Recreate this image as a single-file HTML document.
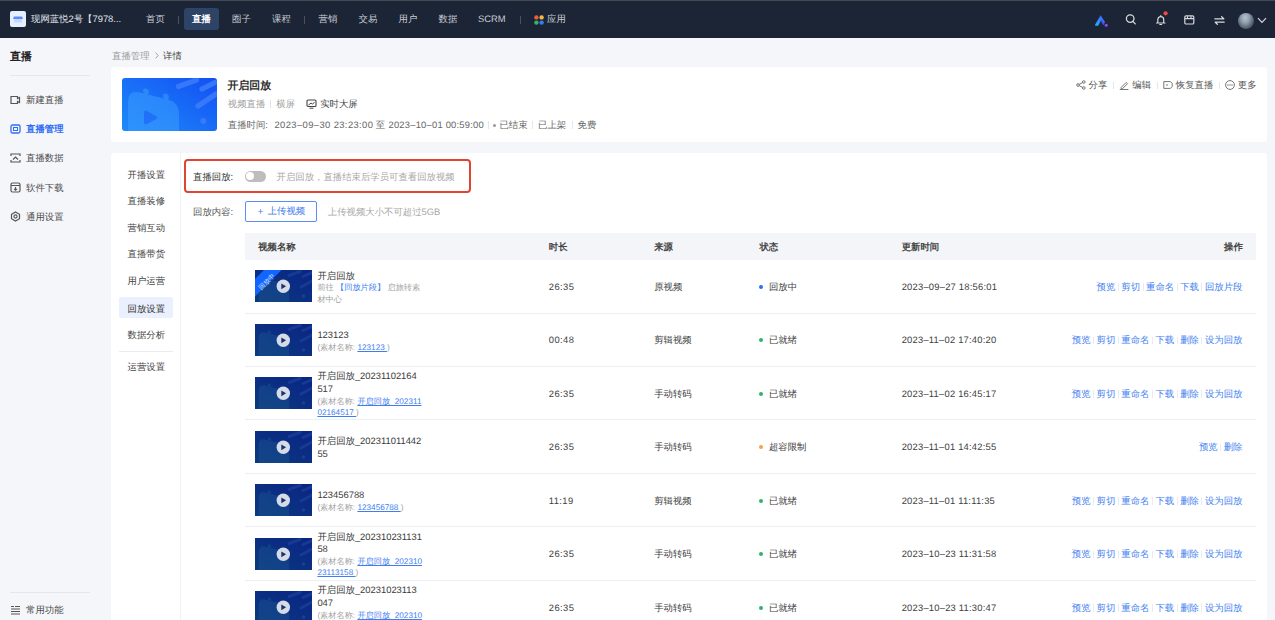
<!DOCTYPE html>
<html><head><meta charset="utf-8">
<style>
*{box-sizing:border-box;margin:0;padding:0}
html,body{text-rendering:geometricPrecision;width:1275px;height:620px;overflow:hidden;background:#f5f6fa;font-family:"Liberation Sans",sans-serif;color:#333;font-size:9.4px}
.a{position:absolute;white-space:nowrap}
#nav{position:absolute;left:0;top:0;width:1275px;height:38px;background:#1c2535;border-top:1px solid #454a52}
.nv{position:absolute;top:12.4px;line-height:12px;font-size:9.4px;color:#c9cdd6}
.dv{position:absolute;top:15px;width:1px;height:8px;background:#4a5060}
.card{position:absolute;left:111px;width:1156px;background:#fff;border-radius:3px}
.sm{position:absolute;left:10px;width:90px;height:14px;line-height:14px;font-size:9.4px;color:#4a4a4a}
.sm .t{position:absolute;left:16px;top:0}
.sn{position:absolute;left:127.5px;line-height:12px;font-size:9.4px;color:#444}
.th{position:absolute;top:240.5px;line-height:12px;font-size:9.4px;font-weight:bold;color:#454545}
.row{position:absolute;left:244.6px;width:1011.4px;border-bottom:1px solid #eeeff2}
.thumb{position:absolute;left:10.6px;width:57px;height:32px;overflow:hidden;background:#062a7c}
.cell{position:absolute;line-height:12px;font-size:9.4px;color:#404040}
.ops{position:absolute;right:13.5px;line-height:12px;font-size:9.4px;color:#4582f0}
.ops i{display:inline-block;width:1px;height:7.5px;background:#e9ebf0;margin:0 2.5px;vertical-align:-1px}
.dot{display:inline-block;width:4px;height:4px;border-radius:2px;margin-right:5.5px;vertical-align:1px}
.n{letter-spacing:.4px}
.nm{position:absolute;left:72.8px;white-space:nowrap;margin-top:.6px}
.nm .ti{font-size:9.4px;line-height:12.8px;color:#3a3a3a}
.nm .su{font-size:8.2px;line-height:11.2px;color:#a3a3a3}
.nm .su a{color:#3f7ef0;text-decoration:underline}.nm .su a.b{text-decoration:none}
</style></head><body>

<div id="nav">
  <div class="a" style="left:10px;top:10px;width:16px;height:16px;background:#e6efff;border-radius:2px">
    <svg width="16" height="16" viewBox="0 0 16 16"><path d="M4 5.5h8l1 2.5H3z" fill="#5a8cf5"/><rect x="4" y="8" width="8" height="3.5" fill="#c5d8ff"/></svg>
  </div>
  <div class="nv" style="left:31px;color:#e3e6ec">现网蓝悦2号【7978...</div>
  <div class="nv" style="left:146px">首页</div>
  <div class="dv" style="left:178px"></div>
  <div class="a" style="left:184px;top:7px;width:35px;height:22px;background:#2d4466;border-radius:3px"></div>
  <div class="nv" style="left:192px;color:#fff;font-weight:bold">直播</div>
  <div class="nv" style="left:232px">圈子</div>
  <div class="nv" style="left:272px">课程</div>
  <div class="dv" style="left:304px"></div>
  <div class="nv" style="left:318.5px">营销</div>
  <div class="nv" style="left:358.5px">交易</div>
  <div class="nv" style="left:398.5px">用户</div>
  <div class="nv" style="left:438.5px">数据</div>
  <div class="nv" style="left:478px">SCRM</div>
  <div class="dv" style="left:519.5px"></div>
  <div class="a" style="left:534px;top:14px;width:10px;height:10px">
    <svg width="10" height="10" viewBox="0 0 10 10"><circle cx="2.4" cy="2.4" r="2.2" fill="#f25a3c"/><circle cx="7.6" cy="2.4" r="2.2" fill="#f6b93b"/><circle cx="2.4" cy="7.6" r="2.2" fill="#2fb56b"/><circle cx="7.6" cy="7.6" r="2.2" fill="#3a7bf5"/></svg>
  </div>
  <div class="nv" style="left:547px">应用</div>

  <!-- right icons -->
  <svg class="a" style="left:1094px;top:12.5px" width="15" height="13" viewBox="0 0 15 13"><defs><linearGradient id="lg" x1="0" y1="1" x2="1" y2="0"><stop offset="0" stop-color="#25b4ff"/><stop offset="1" stop-color="#3f56ff"/></linearGradient></defs><path d="M6.6 1.2L1.2 10.6q-.6 1.2.8 1.2h2.2L7.3 6l2.4 4.2 1.3-2.2z" fill="url(#lg)"/><path d="M7.3 6l2.6 4.6" stroke="#3f56ff" stroke-width="1.6"/><circle cx="12.2" cy="11.2" r="1.5" fill="#9146ff"/></svg>
  <svg class="a" style="left:1124.5px;top:13px" width="12" height="11" viewBox="0 0 12 11"><circle cx="5.2" cy="4.6" r="3.8" fill="none" stroke="#d6d9df" stroke-width="1.3"/><path d="M8 7.6l2.3 2.3" stroke="#d6d9df" stroke-width="1.3" stroke-linecap="round"/></svg>
  <svg class="a" style="left:1155px;top:9.5px" width="14" height="15" viewBox="0 0 14 15"><path d="M1.5 12h8.5M2.8 12V8.6a2.95 2.95 0 0 1 5.9 0V12M5.75 4.6v1M4.8 13.5h1.9" fill="none" stroke="#d6d9df" stroke-width="1.2" stroke-linecap="round"/><circle cx="10.6" cy="2.3" r="2.1" fill="#f24a45"/></svg>
  <svg class="a" style="left:1184px;top:13.2px" width="11" height="11" viewBox="0 0 11 11"><rect x=".8" y="1.8" width="9" height="8.2" rx="1.3" fill="none" stroke="#d6d9df" stroke-width="1.2"/><path d="M.8 4.6h9M3.5 4.6v-2.4M7 4.6v-2.4" stroke="#d6d9df" stroke-width="1.1"/></svg>
  <svg class="a" style="left:1213.5px;top:14.5px" width="11" height="9" viewBox="0 0 11 9"><path d="M.8 2.8h9L7.6.7M10.2 6.2h-9L3.4 8.3" fill="none" stroke="#d6d9df" stroke-width="1.2" stroke-linecap="round" stroke-linejoin="round"/></svg>
  <div class="a" style="left:1237.5px;top:12px;width:16px;height:16px;border-radius:8px;background:radial-gradient(ellipse at 45% 30%,#b7c4cf 0,#8d9cab 35%,#56636f 65%,#22262b 100%)"></div>
  <svg class="a" style="left:1257px;top:16px" width="10" height="7" viewBox="0 0 10 7"><path d="M1 1.2l4 4.2L9 1.2" fill="none" stroke="#d6d9df" stroke-width="1.2"/></svg>
</div>

<!-- sidebar -->
<div class="a" style="left:10px;top:50px;font-size:10.9px;line-height:14px;font-weight:bold;color:#222">直播</div>
<div class="a" style="left:10px;top:75px;width:80px;height:1px;background:#e6e7ec"></div>
<div class="sm" style="top:92.5px">
  <svg class="a" style="left:0;top:2px" width="11" height="10" viewBox="0 0 11 10"><path d="M1 1.5h6.5v2l2-1v5l-2-1v2H1z" fill="none" stroke="#555" stroke-width="1.2"/></svg>
  <span class="t">新建直播</span></div>
<div class="sm" style="top:121.5px;color:#2f6df6;font-weight:bold">
  <svg class="a" style="left:0;top:2px" width="11" height="10" viewBox="0 0 11 10"><rect x="1" y="1" width="9" height="8" rx="1.5" fill="none" stroke="#2f6df6" stroke-width="1.3"/><rect x="3.5" y="3.5" width="4" height="3" fill="none" stroke="#2f6df6" stroke-width="1"/></svg>
  <span class="t">直播管理</span></div>
<div class="sm" style="top:150.5px">
  <svg class="a" style="left:0;top:2px" width="11" height="10" viewBox="0 0 11 10"><path d="M1 3V1h9v2M1 7v2h9V7" fill="none" stroke="#555" stroke-width="1.2"/><path d="M3 6.5l2.5-2.5 2.5 2.5" fill="none" stroke="#555" stroke-width="1.1"/></svg>
  <span class="t">直播数据</span></div>
<div class="sm" style="top:180.5px">
  <svg class="a" style="left:0;top:1.5px" width="11" height="11" viewBox="0 0 11 11"><rect x="1" y="1" width="9" height="9" rx="1.5" fill="none" stroke="#555" stroke-width="1.2"/><path d="M1 3.5h9M5.5 5v3M4 6.8l1.5 1.4 1.5-1.4" fill="none" stroke="#555" stroke-width="1.1"/></svg>
  <span class="t">软件下载</span></div>
<div class="sm" style="top:209.5px">
  <svg class="a" style="left:0;top:1.5px" width="11" height="11" viewBox="0 0 11 11"><path d="M5.5 1l4 2.3v4.4l-4 2.3-4-2.3V3.3z" fill="none" stroke="#555" stroke-width="1.2"/><circle cx="5.5" cy="5.5" r="1.6" fill="none" stroke="#555" stroke-width="1.1"/></svg>
  <span class="t">通用设置</span></div>
<div class="a" style="left:10px;top:591.5px;width:80px;height:1px;background:#e6e7ec"></div>
<div class="sm" style="top:603.0px">
  <svg class="a" style="left:0;top:2px" width="11" height="10" viewBox="0 0 11 10"><path d="M1 1.5h3M1 4h9M1 6.5h9M1 9h9M5 1.5h5" fill="none" stroke="#555" stroke-width="1.1"/></svg>
  <span class="t">常用功能</span></div>

<!-- breadcrumb -->
<div class="a" style="left:112px;top:49.5px;line-height:12px;font-size:9.4px;color:#999">直播管理<svg style="margin:0 4.5px 0 5px;vertical-align:0" width="4" height="7" viewBox="0 0 4 7"><path d="M.6 .6L3.2 3.5.6 6.4" fill="none" stroke="#999" stroke-width=".9"/></svg><span style="color:#444">详情</span></div>

<!-- card 1 -->
<div class="card" style="top:67px;height:75px">
  <div class="a" style="left:11px;top:11px;width:95px;height:53px;border-radius:3px;overflow:hidden;background:linear-gradient(30deg,#1d8bf8,#1550f5)">
    <svg width="95" height="53" viewBox="0 0 95 53">
      <g transform="matrix(1 .25 0 1 0 -4)"><path d="M6 70V26q0-12 12-12h27q12 0 12 12v44z" fill="#3a9cff" opacity=".55"/>
      <circle cx="24" cy="11.5" r="2.9" fill="#3a9cff" opacity=".55"/><circle cx="44" cy="11.5" r="2.9" fill="#3a9cff" opacity=".55"/></g>
      <path d="M22 35q0-3.5 3-2l9 5q2.8 1.5 0 3l-9 5q-3 1.5-3-2z" fill="#1f6cf6" opacity=".85"/>
      <path d="M56.5 8.5L74.5 2M80 11L93 4.5M76 28L94 16" stroke="#3d7dfa" stroke-width="5.2" stroke-linecap="round" opacity=".85"/>
      <circle cx="81.3" cy="43" r="3" fill="#3d7dfa" opacity=".85"/>
    </svg>
  </div>
  <div class="a" style="left:116.5px;top:12px;font-size:10.9px;line-height:14px;font-weight:bold;color:#2b2b2b">开启回放</div>
  <div class="a" style="left:116.8px;top:30.5px;font-size:9.4px;line-height:12px;color:#a0a0a0">视频直播<i style="display:inline-block;width:1px;height:8px;background:#e3e3e3;margin:0 5px;vertical-align:-1px"></i>横屏
    <svg style="margin-left:8px;vertical-align:-2px" width="11" height="10" viewBox="0 0 11 10"><rect x="1" y="1" width="9" height="6.5" rx="1" fill="none" stroke="#444" stroke-width="1.1"/><path d="M2.5 6l2.5-2 1.5 1.2L8.5 3M3.5 9.2h4" fill="none" stroke="#444" stroke-width="1"/></svg><span style="color:#444;margin-left:3.5px">实时大屏</span></div>
  <div class="a " style="left:116.8px;top:51.5px;font-size:9.4px;line-height:12px;color:#666">直播时间:</div><div class="a n" style="left:163.5px;top:51.5px;font-size:9.4px;line-height:12px;color:#666">2023–09–30 23:23:00</div><div class="a " style="left:264.8px;top:51.5px;font-size:9.4px;line-height:12px;color:#666">至</div><div class="a n" style="letter-spacing:.22px;left:277.5px;top:51.5px;font-size:9.4px;line-height:12px;color:#666">2023–10–01 00:59:00</div><div class="a" style="left:376.7px;top:54.0px;width:1px;height:7.5px;background:#e6e6e6"></div><div class="a" style="left:382.2px;top:56.5px;width:3px;height:3px;border-radius:2px;background:#999"></div><div class="a " style="left:388.4px;top:51.5px;font-size:9.4px;line-height:12px;color:#666">已结束</div><div class="a" style="left:421px;top:54.0px;width:1px;height:7.5px;background:#e6e6e6"></div><div class="a " style="left:427px;top:51.5px;font-size:9.4px;line-height:12px;color:#666">已上架</div><div class="a" style="left:461px;top:54.0px;width:1px;height:7.5px;background:#e6e6e6"></div><div class="a " style="left:466.5px;top:51.5px;font-size:9.4px;line-height:12px;color:#666">免费</div>
  <!-- actions -->
  <svg class="a" style="left:965.0px;top:12.5px" width="10" height="10" viewBox="0 0 10 10"><circle cx="7.8" cy="2" r="1.3" fill="none" stroke="#666" stroke-width=".9"/><circle cx="2" cy="5" r="1.3" fill="none" stroke="#666" stroke-width=".9"/><circle cx="7.8" cy="8" r="1.3" fill="none" stroke="#666" stroke-width=".9"/><path d="M3.2 4.3l3.4-1.7M3.2 5.7l3.4 1.7" fill="none" stroke="#666" stroke-width=".9"/></svg><div class="a" style="left:977.6px;top:12.2px;font-size:9.4px;line-height:12px;color:#555">分享</div><div class="a" style="left:1002.0px;top:14.5px;width:1px;height:7.5px;background:#e6e6e6"></div><svg class="a" style="left:1008.2px;top:12.5px" width="10" height="10" viewBox="0 0 10 10"><path d="M2.2 7.4L7.2 2.4l1.3 1.3-5 5H2.2zM.8 9.5h8.6" fill="none" stroke="#666" stroke-width=".9"/></svg><div class="a" style="left:1021.3px;top:12.2px;font-size:9.4px;line-height:12px;color:#555">编辑</div><div class="a" style="left:1045.9px;top:14.5px;width:1px;height:7.5px;background:#e6e6e6"></div><svg class="a" style="left:1052.0px;top:12.5px" width="10" height="10" viewBox="0 0 10 10"><path d="M.8 1.6h6.6l1.8 1.8v3.2L7.4 8.4H.8z" fill="none" stroke="#666" stroke-width=".9"/><path d="M3 5h2" fill="none" stroke="#666" stroke-width=".9"/></svg><div class="a" style="left:1064.8px;top:12.2px;font-size:9.4px;line-height:12px;color:#555">恢复直播</div><div class="a" style="left:1108.0px;top:14.5px;width:1px;height:7.5px;background:#e6e6e6"></div><svg class="a" style="left:1113.7px;top:12.5px" width="10" height="10" viewBox="0 0 10 10"><circle cx="5" cy="5" r="4.4" fill="none" stroke="#666" stroke-width=".9"/><circle cx="3" cy="5" r=".65" fill="#666"/><circle cx="5" cy="5" r=".65" fill="#666"/><circle cx="7" cy="5" r=".65" fill="#666"/></svg><div class="a" style="left:1126.8px;top:12.2px;font-size:9.4px;line-height:12px;color:#555">更多</div>
</div>

<!-- card 2 -->
<div class="card" style="top:152.5px;height:480px"></div>
<div class="a" style="left:180px;top:152.5px;width:1px;height:470px;background:#f1f2f5"></div>
<div class="sn" style="top:168.5px">开播设置</div>
<div class="sn" style="top:194.8px">直播装修</div>
<div class="sn" style="top:221.9px">营销互动</div>
<div class="sn" style="top:248.3px">直播带货</div>
<div class="sn" style="top:275.4px">用户运营</div>
<div class="a" style="left:119.3px;top:297px;width:53.4px;height:21.4px;background:#eaf0fd;border-radius:2px"></div>
<div class="sn" style="top:302.5px;color:#333">回放设置</div>
<div class="sn" style="top:329.2px">数据分析</div>
<div class="a" style="left:119.3px;top:350.5px;width:53.4px;height:1px;background:#ececf0"></div>
<div class="sn" style="top:361.3px">运营设置</div>

<!-- replay toggle -->
<div class="a" style="left:184.2px;top:159px;width:286.4px;height:33.8px;border:2px solid #e0452f;border-radius:4px"></div>
<div class="a" style="left:193px;top:170.6px;font-size:9.4px;line-height:12px;color:#333">直播回放:</div>
<div class="a" style="left:244.7px;top:171.2px;width:21.2px;height:10.6px;border-radius:6px;background:#bdbdbd"><div style="position:absolute;left:1.3px;top:1.3px;width:8px;height:8px;border-radius:4px;background:#fff"></div></div>
<div class="a" style="left:276.5px;top:170.6px;font-size:9.4px;line-height:12px;color:#a8a8a8">开启回放，直播结束后学员可查看回放视频</div>
<div class="a" style="left:193px;top:205.6px;font-size:9.4px;line-height:12px;color:#555">回放内容:</div>
<div class="a" style="left:244.7px;top:201px;width:72.3px;height:20.8px;border:1px solid #5a8ef4;border-radius:2px;color:#3a78ee;font-size:9.4px;line-height:18.8px;padding-left:10px">＋ 上传视频</div>
<div class="a" style="left:327.8px;top:205.6px;font-size:9.4px;line-height:12px;color:#a8a8a8">上传视频大小不可超过5GB</div>

<!-- table header -->
<div class="a" style="left:244.6px;top:233.2px;width:1011.4px;height:26.6px;background:#f4f5f8"></div>
<div class="th" style="left:258.2px">视频名称</div>
<div class="th" style="left:548.8px">时长</div>
<div class="th" style="left:654.2px">来源</div>
<div class="th" style="left:759.4px">状态</div>
<div class="th" style="left:901.7px">更新时间</div>
<div class="th" style="left:1224px">操作</div>

<div id="rows">
<svg width="0" height="0" style="position:absolute"><defs>
<linearGradient id="dkg" x1="0" y1="1" x2="1" y2="0"><stop offset="0" stop-color="#0b3a7e"/><stop offset="1" stop-color="#0a2486"/></linearGradient>
<g id="dk"><rect width="57" height="32" fill="url(#dkg)"/>
 <g transform="scale(.6) matrix(1 .25 0 1 0 -4)"><path d="M6 70V26q0-12 12-12h27q12 0 12 12v44z" fill="#1a5590" opacity=".45"/><circle cx="24" cy="11.5" r="2.9" fill="#1a5590" opacity=".45"/><circle cx="44" cy="11.5" r="2.9" fill="#1a5590" opacity=".45"/></g>
 <path d="M34 5.5L45 1.5M48 6.5L57 2.5M46 17L57 11" stroke="#1a3f96" stroke-width="3" stroke-linecap="round" opacity=".8"/>
 <circle cx="48.5" cy="26" r="1.8" fill="#1a3f96"/>
 <circle cx="28.3" cy="16.3" r="6.7" fill="#d6dbe9"/><path d="M26.3 13.4v5.8l4.8-2.9z" fill="#1b3466"/></g>
<g id="rib"><path d="M9 0h17.5L0 26.5V9z" fill="#1266ff"/><text x="0" y="0" transform="translate(6.3 20.2) rotate(-45)" font-size="6.6" fill="#dbe6ff" font-family="Liberation Sans,sans-serif">回放中</text></g>
</defs></svg>
<div class="row" style="top:260.10px;height:53.45px">
 <svg class="thumb" style="top:10.23px" width="57" height="32" viewBox="0 0 57 32"><use href="#dk"/><use href="#rib"/></svg>
 <div class="nm" style="top:8.98px"><div class="ti">开启回放</div><div class="su">前往 <a class="b">【回放片段】</a> 启旅转素</div><div class="su">材中心</div></div>
 <div class="cell n" style="left:304.2px;top:20.73px">26:35</div>
 <div class="cell" style="left:409.6px;top:20.73px">原视频</div>
 <div class="cell" style="left:514.8px;top:20.73px"><span class="dot" style="background:#2f6df6"></span>回放中</div>
 <div class="cell n" style="letter-spacing:.22px;left:657.1px;top:20.73px">2023–09–27 18:56:01</div>
 <div class="ops" style="top:20.73px">预览<i></i>剪切<i></i>重命名<i></i>下载<i></i>回放片段</div>
</div>
<div class="row" style="top:313.55px;height:53.45px">
 <svg class="thumb" style="top:10.23px" width="57" height="32" viewBox="0 0 57 32"><use href="#dk"/></svg>
 <div class="nm" style="top:14.68px"><div class="ti">123123</div><div class="su">(素材名称: <a>123123 </a>)</div></div>
 <div class="cell n" style="left:304.2px;top:20.73px">00:48</div>
 <div class="cell" style="left:409.6px;top:20.73px">剪辑视频</div>
 <div class="cell" style="left:514.8px;top:20.73px"><span class="dot" style="background:#2fb36b"></span>已就绪</div>
 <div class="cell n" style="letter-spacing:.22px;left:657.1px;top:20.73px">2023–11–02 17:40:20</div>
 <div class="ops" style="top:20.73px">预览<i></i>剪切<i></i>重命名<i></i>下载<i></i>删除<i></i>设为回放</div>
</div>
<div class="row" style="top:367.00px;height:53.45px">
 <svg class="thumb" style="top:10.23px" width="57" height="32" viewBox="0 0 57 32"><use href="#dk"/></svg>
 <div class="nm" style="top:2.62px"><div class="ti">开启回放_20231102164<br>517</div><div class="su">(素材名称: <a>开启回放_202311</a></div><div class="su"><a>02164517 </a>)</div></div>
 <div class="cell n" style="left:304.2px;top:20.73px">26:35</div>
 <div class="cell" style="left:409.6px;top:20.73px">手动转码</div>
 <div class="cell" style="left:514.8px;top:20.73px"><span class="dot" style="background:#2fb36b"></span>已就绪</div>
 <div class="cell n" style="letter-spacing:.22px;left:657.1px;top:20.73px">2023–11–02 16:45:17</div>
 <div class="ops" style="top:20.73px">预览<i></i>剪切<i></i>重命名<i></i>下载<i></i>删除<i></i>设为回放</div>
</div>
<div class="row" style="top:420.45px;height:53.45px">
 <svg class="thumb" style="top:10.23px" width="57" height="32" viewBox="0 0 57 32"><use href="#dk"/></svg>
 <div class="nm" style="top:14.03px"><div class="ti">开启回放_202311011442<br>55</div></div>
 <div class="cell n" style="left:304.2px;top:20.73px">26:35</div>
 <div class="cell" style="left:409.6px;top:20.73px">手动转码</div>
 <div class="cell" style="left:514.8px;top:20.73px"><span class="dot" style="background:#f5a340"></span>超容限制</div>
 <div class="cell n" style="letter-spacing:.22px;left:657.1px;top:20.73px">2023–11–01 14:42:55</div>
 <div class="ops" style="top:20.73px">预览<i></i>删除</div>
</div>
<div class="row" style="top:473.90px;height:53.45px">
 <svg class="thumb" style="top:10.23px" width="57" height="32" viewBox="0 0 57 32"><use href="#dk"/></svg>
 <div class="nm" style="top:14.68px"><div class="ti">123456788</div><div class="su">(素材名称: <a>123456788 </a>)</div></div>
 <div class="cell n" style="left:304.2px;top:20.73px">11:19</div>
 <div class="cell" style="left:409.6px;top:20.73px">剪辑视频</div>
 <div class="cell" style="left:514.8px;top:20.73px"><span class="dot" style="background:#2fb36b"></span>已就绪</div>
 <div class="cell n" style="letter-spacing:.22px;left:657.1px;top:20.73px">2023–11–01 11:11:35</div>
 <div class="ops" style="top:20.73px">预览<i></i>剪切<i></i>重命名<i></i>下载<i></i>删除<i></i>设为回放</div>
</div>
<div class="row" style="top:527.35px;height:53.45px">
 <svg class="thumb" style="top:10.23px" width="57" height="32" viewBox="0 0 57 32"><use href="#dk"/></svg>
 <div class="nm" style="top:2.62px"><div class="ti">开启回放_202310231131<br>58</div><div class="su">(素材名称: <a>开启回放_202310</a></div><div class="su"><a>23113158 </a>)</div></div>
 <div class="cell n" style="left:304.2px;top:20.73px">26:35</div>
 <div class="cell" style="left:409.6px;top:20.73px">手动转码</div>
 <div class="cell" style="left:514.8px;top:20.73px"><span class="dot" style="background:#2fb36b"></span>已就绪</div>
 <div class="cell n" style="letter-spacing:.22px;left:657.1px;top:20.73px">2023–10–23 11:31:58</div>
 <div class="ops" style="top:20.73px">预览<i></i>剪切<i></i>重命名<i></i>下载<i></i>删除<i></i>设为回放</div>
</div>
<div class="row" style="top:580.80px;height:53.45px">
 <svg class="thumb" style="top:10.23px" width="57" height="32" viewBox="0 0 57 32"><use href="#dk"/></svg>
 <div class="nm" style="top:2.62px"><div class="ti">开启回放_20231023113<br>047</div><div class="su">(素材名称: <a>开启回放_202310</a></div><div class="su"><a>23113047 </a>)</div></div>
 <div class="cell n" style="left:304.2px;top:20.73px">26:35</div>
 <div class="cell" style="left:409.6px;top:20.73px">手动转码</div>
 <div class="cell" style="left:514.8px;top:20.73px"><span class="dot" style="background:#2fb36b"></span>已就绪</div>
 <div class="cell n" style="letter-spacing:.22px;left:657.1px;top:20.73px">2023–10–23 11:30:47</div>
 <div class="ops" style="top:20.73px">预览<i></i>剪切<i></i>重命名<i></i>下载<i></i>删除<i></i>设为回放</div>
</div>
</div>
</body></html>
